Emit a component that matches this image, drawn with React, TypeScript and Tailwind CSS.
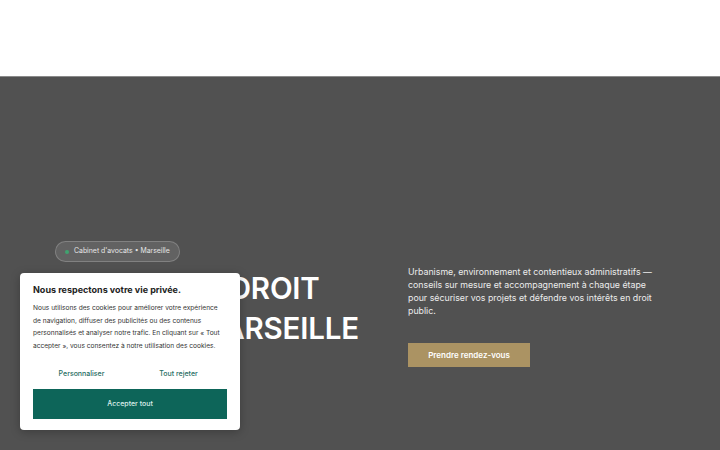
export default function App() {
  return (
    <div className="w-[720px] h-[450px] overflow-hidden bg-white font-['Inter',sans-serif] relative">
      {/* header */}
      <header className="h-[76px] bg-white"></header>

      {/* hero */}
      <section className="h-[500px] bg-[#515151] border-t border-[#8a8a8a]">
        <div className="grid grid-cols-[313px_257px] gap-10 px-[55px] pt-[164px]">
          <div className="flex flex-col items-start">
            <div className="flex items-center gap-[5px] h-[21px] px-[9px] rounded-full border border-white/20 bg-white/10">
              <span className="w-[4px] h-[4px] rounded-full bg-[#3fa36f]"></span>
              <span className="text-[6.9px] text-[#e6e6e6]">Cabinet d'avocats • Marseille</span>
            </div>
            <h1 className="mt-[6px] text-[29.5px] leading-[40px] font-semibold text-white tracking-[-0.2px] whitespace-nowrap">
              AVOCAT EN DROIT
              <br />
              PUBLIC À MARSEILLE
            </h1>
          </div>
          <div className="pt-[24px]">
            <p className="text-[8.8px] leading-[13px] text-[#ececec]">
              Urbanisme, environnement et contentieux administratifs — conseils sur mesure et accompagnement à chaque étape pour sécuriser vos projets et défendre vos intérêts en droit public.
            </p>
            <button className="mt-[26px] h-[24px] w-[122px] bg-[#ab9363] text-white text-[8px] font-semibold">
              Prendre rendez-vous
            </button>
          </div>
        </div>
      </section>

      {/* cookie banner */}
      <div className="absolute left-[20px] bottom-[20px] w-[220px] bg-white rounded-[4px] shadow-[0_2px_10px_rgba(0,0,0,0.25)] px-[13px] pt-[10px] pb-[11px]">
        <h2 className="text-[9px] font-bold text-[#222] leading-[14px]">Nous respectons votre vie privée.</h2>
        <p className="mt-[5px] text-[6.6px] leading-[12.5px] text-[#333]">
          Nous utilisons des cookies pour améliorer votre expérience de navigation, diffuser des publicités ou des contenus personnalisés et analyser notre trafic. En cliquant sur « Tout accepter », vous consentez à notre utilisation des cookies.
        </p>
        <div className="mt-[12px] flex">
          <button className="flex-1 h-[20px] text-[7px] font-medium text-[#1f6d62]">Personnaliser</button>
          <button className="flex-1 h-[20px] text-[7px] font-medium text-[#1f6d62]">Tout rejeter</button>
        </div>
        <button className="mt-[5px] w-full h-[30px] bg-[#0d6559] text-[#dcefeb] text-[7px] font-medium">
          Accepter tout
        </button>
      </div>
    </div>
  );
}
